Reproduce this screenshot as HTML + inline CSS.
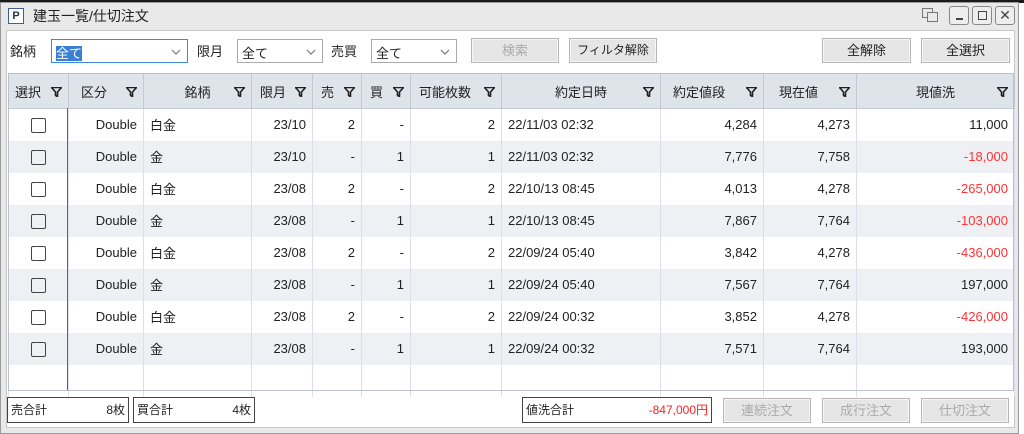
<!DOCTYPE html>
<html><head><meta charset="utf-8"><style>
*{box-sizing:border-box;margin:0;padding:0}
body{width:1024px;height:434px;background:#fff;font-family:"Liberation Sans","Noto Sans CJK JP",sans-serif;font-size:13px;color:#222;position:relative;overflow:hidden}
.a{position:absolute}
.win{left:0;top:2px;width:1019px;height:432px;background:#e9e9e9;border:1px solid #9a9a9a}
.top{left:0;top:0;width:1024px;height:3px;background:#1a1a1a}
.client{left:6px;top:30px;width:1009px;height:398px;background:#fff;border:1px solid #c8c8c8}
.sel{height:24px;border:1px solid #aaa;background:#fff;padding:3px 4px;font-size:13px}
.sel svg{position:absolute;right:6px;top:9px}
.btn{height:25px;border:1px solid #b5b5b5;background:#e6e6e6;text-align:center;line-height:23px;font-size:13px;box-shadow:inset 0 0 0 1px #f6f6f6}
.dis{color:#aaa}
table{border-collapse:collapse;table-layout:fixed;position:absolute;left:8px;top:73px;width:1006px}
th{height:35px;background:#dfe3ea;border:1px solid #c3cad4;font-weight:normal;font-size:13px;position:relative;text-align:center}
th svg{position:absolute;right:6px;top:13px}
td{height:32px;border-left:1px solid #dde;border-right:1px solid #dde;padding:0 6px;font-size:13px;white-space:nowrap}
tr.e td{background:#eef0f4}
.r{text-align:right}.c{text-align:center}
.neg{color:#f33}
.cb{display:inline-block;width:15px;height:15px;border:1.5px solid #444;border-radius:2px;vertical-align:middle}
.box{height:26px;border:1px solid #444;background:#fff;font-size:12px;line-height:24px;padding:0 3px}
</style></head><body>
<svg width="0" height="0" style="position:absolute"><defs><symbol id="fu" viewBox="0 0 11 10"><path d="M0.5 0.5H10.5L6.5 5V9.5L4.5 8.5V5Z" fill="none" stroke="#222" stroke-width="1.6" stroke-linejoin="round"/></symbol><symbol id="ch" viewBox="0 0 10 6"><path d="M1 1L5 5L9 1" fill="none" stroke="#777" stroke-width="1.2"/></symbol></defs></svg>
<div class="a top"></div>
<div class="a win"></div>
<div class="a" style="left:8px;top:8px;width:16px;height:16px;border:1px solid #3a5f9a;background:#fff;color:#234;font-size:11px;font-weight:bold;text-align:center;line-height:14px">P</div>
<div class="a" style="left:33px;top:6px;font-size:14px">建玉一覧/仕切注文</div>
<div class="a" style="left:922px;top:8px;width:11px;height:10px;border:1.5px solid #777"></div>
<div class="a" style="left:927px;top:12px;width:11px;height:10px;border:1.5px solid #777;background:#e9e9e9"></div>
<div class="a" style="left:949px;top:6px;width:20px;height:19px;border:1px solid #888;border-radius:3px;background:#eee"><div class="a" style="left:6px;top:11px;width:7px;height:2px;background:#444"></div></div>
<div class="a" style="left:972px;top:6px;width:20px;height:19px;border:1px solid #888;border-radius:3px;background:#eee"><div class="a" style="left:5px;top:4px;width:9px;height:9px;border:1.5px solid #444"></div></div>
<div class="a" style="left:995px;top:6px;width:20px;height:19px;border:1px solid #888;border-radius:3px;background:#eee;text-align:center;line-height:17px;font-size:14px;color:#444">✕</div>
<div class="a client"></div>
<div class="a" style="left:10px;top:41px">銘柄</div>
<div class="a sel" style="left:51px;top:39px;width:137px;border-color:#3c8ad8"><span style="background:#3a7fd4;color:#fff">全て</span><svg width="10" height="6"><use href="#ch"/></svg></div>
<div class="a" style="left:197px;top:41px">限月</div>
<div class="a sel" style="left:237px;top:39px;width:86px">全て<svg width="10" height="6"><use href="#ch"/></svg></div>
<div class="a" style="left:331px;top:41px">売買</div>
<div class="a sel" style="left:371px;top:39px;width:86px">全て<svg width="10" height="6"><use href="#ch"/></svg></div>
<div class="a btn dis" style="left:471px;top:38px;width:88px">検索</div>
<div class="a btn" style="left:569px;top:38px;width:88px;font-size:12px">フィルタ解除</div>
<div class="a btn" style="left:822px;top:38px;width:89px">全解除</div>
<div class="a btn" style="left:921px;top:38px;width:89px">全選択</div>
<table>
<colgroup><col style="width:60px"><col style="width:75px"><col style="width:108px"><col style="width:61px"><col style="width:49px"><col style="width:49px"><col style="width:91px"><col style="width:159px"><col style="width:103px"><col style="width:93px"><col style="width:158px"></colgroup>
<tr><th style="text-align:left;padding-left:6px">選択<svg width="11" height="10"><use href="#fu"/></svg></th><th style="text-align:left;padding-left:12px">区分<svg width="11" height="10"><use href="#fu"/></svg></th><th>銘柄<svg width="11" height="10"><use href="#fu"/></svg></th><th style="text-align:left;padding-left:8px">限月<svg width="11" height="10"><use href="#fu"/></svg></th><th style="text-align:left;padding-left:8px">売<svg width="11" height="10"><use href="#fu"/></svg></th><th style="text-align:left;padding-left:8px">買<svg width="11" height="10"><use href="#fu"/></svg></th><th style="text-align:left;padding-left:8px">可能枚数<svg width="11" height="10"><use href="#fu"/></svg></th><th>約定日時<svg width="11" height="10"><use href="#fu"/></svg></th><th style="text-align:left;padding-left:12px">約定値段<svg width="11" height="10"><use href="#fu"/></svg></th><th style="text-align:left;padding-left:15px">現在値<svg width="11" height="10"><use href="#fu"/></svg></th><th>現値洗<svg width="11" height="10"><use href="#fu"/></svg></th></tr>
<tr><td class="c"><span class="cb"></span></td><td class="r">Double</td><td>白金</td><td class="r">23/10</td><td class="r">2</td><td class="r">-</td><td class="r">2</td><td>22/11/03 02:32</td><td class="r">4,284</td><td class="r">4,273</td><td class="r">11,000</td></tr>
<tr class="e"><td class="c"><span class="cb"></span></td><td class="r">Double</td><td>金</td><td class="r">23/10</td><td class="r">-</td><td class="r">1</td><td class="r">1</td><td>22/11/03 02:32</td><td class="r">7,776</td><td class="r">7,758</td><td class="r neg">-18,000</td></tr>
<tr><td class="c"><span class="cb"></span></td><td class="r">Double</td><td>白金</td><td class="r">23/08</td><td class="r">2</td><td class="r">-</td><td class="r">2</td><td>22/10/13 08:45</td><td class="r">4,013</td><td class="r">4,278</td><td class="r neg">-265,000</td></tr>
<tr class="e"><td class="c"><span class="cb"></span></td><td class="r">Double</td><td>金</td><td class="r">23/08</td><td class="r">-</td><td class="r">1</td><td class="r">1</td><td>22/10/13 08:45</td><td class="r">7,867</td><td class="r">7,764</td><td class="r neg">-103,000</td></tr>
<tr><td class="c"><span class="cb"></span></td><td class="r">Double</td><td>白金</td><td class="r">23/08</td><td class="r">2</td><td class="r">-</td><td class="r">2</td><td>22/09/24 05:40</td><td class="r">3,842</td><td class="r">4,278</td><td class="r neg">-436,000</td></tr>
<tr class="e"><td class="c"><span class="cb"></span></td><td class="r">Double</td><td>金</td><td class="r">23/08</td><td class="r">-</td><td class="r">1</td><td class="r">1</td><td>22/09/24 05:40</td><td class="r">7,567</td><td class="r">7,764</td><td class="r">197,000</td></tr>
<tr><td class="c"><span class="cb"></span></td><td class="r">Double</td><td>白金</td><td class="r">23/08</td><td class="r">2</td><td class="r">-</td><td class="r">2</td><td>22/09/24 00:32</td><td class="r">3,852</td><td class="r">4,278</td><td class="r neg">-426,000</td></tr>
<tr class="e"><td class="c"><span class="cb"></span></td><td class="r">Double</td><td>金</td><td class="r">23/08</td><td class="r">-</td><td class="r">1</td><td class="r">1</td><td>22/09/24 00:32</td><td class="r">7,571</td><td class="r">7,764</td><td class="r">193,000</td></tr>
<tr><td style="height:25px"></td><td></td><td></td><td></td><td></td><td></td><td></td><td></td><td></td><td></td><td></td></tr>
</table>
<div class="a" style="left:8px;top:73px;width:1006px;height:318px;border:1px solid #b8c2cc;pointer-events:none"></div>
<div class="a" style="left:67px;top:108px;width:1px;height:282px;background:#666"></div>
<div class="a box" style="left:7px;top:397px;width:122px">売合計<span style="float:right">8枚</span></div>
<div class="a box" style="left:133px;top:397px;width:122px">買合計<span style="float:right">4枚</span></div>
<div class="a box" style="left:522px;top:397px;width:190px">値洗合計<span style="float:right;color:#f22">-847,000円</span></div>
<div class="a btn dis" style="left:723px;top:398px;width:88px">連続注文</div>
<div class="a btn dis" style="left:822px;top:398px;width:88px">成行注文</div>
<div class="a btn dis" style="left:921px;top:398px;width:88px">仕切注文</div>
</body></html>
